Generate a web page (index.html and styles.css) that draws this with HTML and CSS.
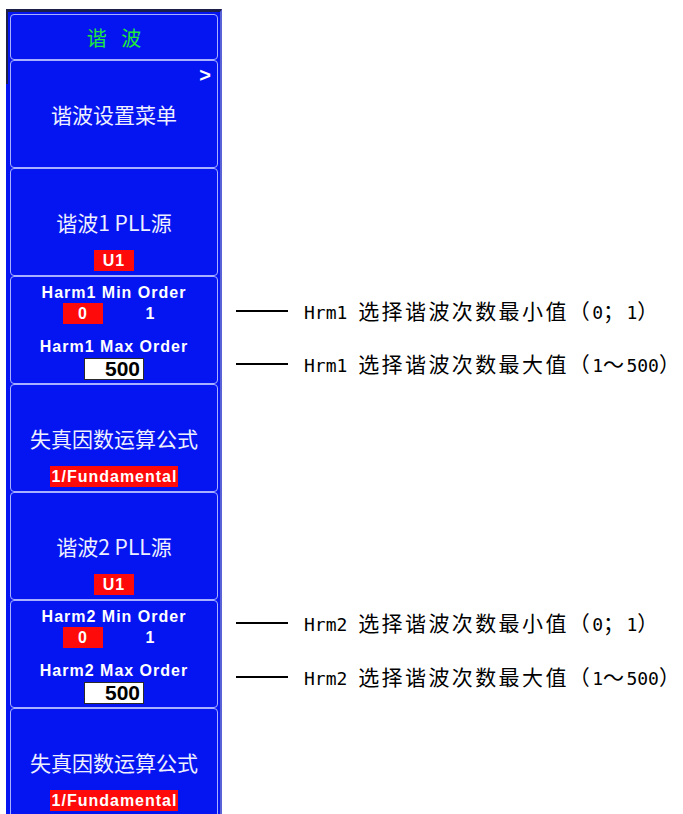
FILE: index.html
```
<!DOCTYPE html>
<html lang="zh-CN">
<head>
    <meta charset="UTF-8">
    <meta name="viewport" content="width=device-width, initial-scale=1.0">
    <title>谐波设置菜单</title>
    <link rel="stylesheet" href="styles.css">
</head>
<body>
    <div class="page">
        <div class="panel">
            <div class="key key-title">谐 波</div>

            <div class="key key-menu">
                <span class="arrow">&gt;</span>
                <span class="key-label">谐波设置菜单</span>
            </div>

            <div class="key key-value">
                <span class="key-label">谐波1 PLL源</span>
                <span class="tag">U1</span>
            </div>

            <div class="key key-order">
                <span class="order-label">Harm1 Min Order</span>
                <div class="choice">
                    <span class="tag tag-choice">0</span>
                    <span class="choice-alt">1</span>
                </div>
                <span class="order-label order-max">Harm1 Max Order</span>
                <span class="number">500</span>
            </div>

            <div class="key key-value">
                <span class="key-label">失真因数运算公式</span>
                <span class="tag tag-wide">1/Fundamental</span>
            </div>

            <div class="key key-value">
                <span class="key-label">谐波2 PLL源</span>
                <span class="tag">U1</span>
            </div>

            <div class="key key-order">
                <span class="order-label">Harm2 Min Order</span>
                <div class="choice">
                    <span class="tag tag-choice">0</span>
                    <span class="choice-alt">1</span>
                </div>
                <span class="order-label order-max">Harm2 Max Order</span>
                <span class="number">500</span>
            </div>

            <div class="key key-value key-last">
                <span class="key-label">失真因数运算公式</span>
                <span class="tag tag-wide">1/Fundamental</span>
            </div>
        </div>

        <div class="notes">
            <div class="note note-1">
                <span class="note-line"></span>
                <span class="note-text"><span class="latin">Hrm1 </span>选择谐波次数最小值（<span class="latin">0</span>；<span class="latin">1</span>）</span>
            </div>
            <div class="note note-2">
                <span class="note-line"></span>
                <span class="note-text"><span class="latin">Hrm1 </span>选择谐波次数最大值（<span class="latin">1</span>～<span class="latin">500</span>）</span>
            </div>
            <div class="note note-3">
                <span class="note-line"></span>
                <span class="note-text"><span class="latin">Hrm2 </span>选择谐波次数最小值（<span class="latin">0</span>；<span class="latin">1</span>）</span>
            </div>
            <div class="note note-4">
                <span class="note-line"></span>
                <span class="note-text"><span class="latin">Hrm2 </span>选择谐波次数最大值（<span class="latin">1</span>～<span class="latin">500</span>）</span>
            </div>
        </div>
    </div>
</body>
</html>
```

FILE: styles.css
```
body {
    margin: 0;
    background: #fff;
    font-family: "Noto Sans CJK SC", sans-serif;
    height: 814px;
    overflow: hidden;
}
.page {
    display: flex;
    align-items: flex-start;
    padding-left: 6px;
    padding-top: 9px;
}

/* soft-key column */
.panel {
    flex: none;
    width: 216px;
    height: 805px;
    box-sizing: border-box;
    border-top: 3px solid #1c1f4a;
    border-right: 2px solid #5a62d8;
    padding: 2px 2px 0 4px;
    background: linear-gradient(#1c1f4a, #1c1f4a) left top / 2px 72px no-repeat, #0515f2;
    display: flex;
    flex-direction: column;
    overflow: hidden;
}
.key {
    position: relative;
    flex: none;
    height: 108px;
    box-sizing: border-box;
    border: 1px solid #a9b0ff;
    border-radius: 4px;
    display: flex;
    flex-direction: column;
    align-items: center;
    color: #eef0ff;
}
.key-title {
    height: 46px;
    justify-content: center;
    font-size: 20px;
    color: #1ee83a;
    letter-spacing: 5px;
    padding-left: 5px;
}
.key-menu {
    justify-content: center;
}
.key-label {
    font-size: 21px;
    line-height: 28px;
    white-space: nowrap;
}
.arrow {
    position: absolute;
    top: 3px;
    right: 6px;
    font-family: "Liberation Sans", sans-serif;
    font-weight: bold;
    font-size: 20px;
    color: #fff;
}
.key-value {
    padding-top: 39px;
}
.key-last {
    height: 120px;
}
.tag {
    margin-top: 14px;
    background: #ff0a0a;
    color: #fff;
    font-family: "Liberation Sans", sans-serif;
    font-weight: bold;
    font-size: 16px;
    line-height: 21px;
    min-width: 40px;
    text-align: center;
    letter-spacing: 1px;
}
.tag-wide {
    padding: 0 1px 0 2px;
    letter-spacing: 1px;
}

/* harmonic order keys */
.key-order {
    padding-top: 7px;
}
.order-label {
    font-family: "Liberation Sans", sans-serif;
    font-weight: bold;
    font-size: 16px;
    line-height: 18px;
    letter-spacing: 1px;
    color: #fff;
    white-space: nowrap;
}
.order-max {
    margin-top: 14px;
}
.choice {
    display: flex;
    gap: 27px;
    margin-top: 1px;
    margin-left: 5px;
}
.tag-choice {
    margin-top: 0;
}
.choice-alt {
    width: 40px;
    text-align: center;
    font-family: "Liberation Sans", sans-serif;
    font-weight: bold;
    font-size: 16px;
    line-height: 21px;
    color: #fff;
}
.number {
    margin-top: 2px;
    width: 60px;
    height: 22px;
    box-sizing: border-box;
    border: 1px solid #2a2a2a;
    background: #fff;
    color: #000;
    font-family: "Liberation Sans", sans-serif;
    font-weight: bold;
    font-size: 21px;
    line-height: 20px;
    text-align: right;
    padding-right: 3px;
}

/* callouts */
.notes {
    flex: none;
    display: flex;
    flex-direction: column;
    padding-top: 290px;
    margin-left: 14px;
}
.note {
    display: flex;
    align-items: center;
    height: 24px;
    color: #000;
    white-space: nowrap;
}
.note-line {
    width: 52px;
    height: 2px;
    background: #000;
    margin-right: 16px;
    flex: none;
}
.note-text {
    font-size: 21px;
    line-height: 24px;
    letter-spacing: 2.4px;
}
.latin {
    font-family: "DejaVu Sans Mono", monospace;
    font-size: 18px;
    letter-spacing: 0;
}
.note-2 {
    margin-top: 29px;
}
.note-3 {
    margin-top: 235px;
}
.note-4 {
    margin-top: 30px;
}
```
